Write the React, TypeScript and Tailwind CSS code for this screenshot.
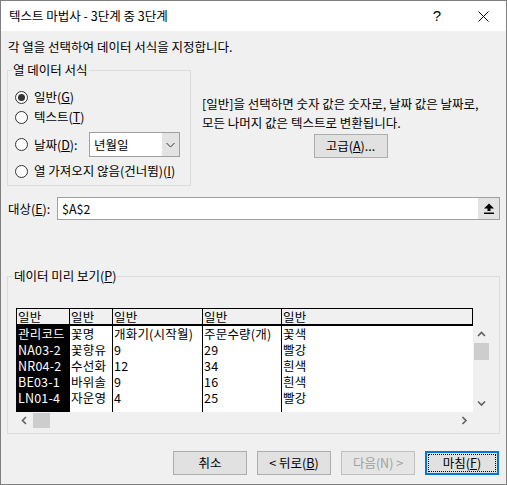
import React from 'react';

const rows = [
  ['관리코드', '꽃명', '개화기(시작월)', '주문수량(개)', '꽃색'],
  ['NA03-2', '꽃향유', '9', '29', '빨강'],
  ['NR04-2', '수선화', '12', '34', '흰색'],
  ['BE03-1', '바위솔', '9', '16', '흰색'],
  ['LN01-4', '자운영', '4', '25', '빨강'],
];

const colWidths = ['w-[53px]', 'w-[43px]', 'w-[90px]', 'w-[79px]', 'w-[192px]'];

function Radio({ checked }: { checked?: boolean }) {
  return (
    <span className="w-[13px] h-[13px] rounded-full border border-[#333333] bg-white flex items-center justify-center shrink-0">
      {checked && <span className="w-[7px] h-[7px] rounded-full bg-[#333333]" />}
    </span>
  );
}

function Chevron({ dir }: { dir: 'up' | 'down' | 'left' | 'right' }) {
  const pts = {
    up: '1,6 4.5,2.5 8,6',
    down: '1,2.5 4.5,6 8,2.5',
    left: '6,1 2.5,4.5 6,8',
    right: '2.5,1 6,4.5 2.5,8',
  }[dir];
  return (
    <svg width="9" height="9" viewBox="0 0 9 9">
      <polyline points={pts} fill="none" stroke="#606060" strokeWidth="1.6" />
    </svg>
  );
}

function Button({ children, disabled }: { children: React.ReactNode; disabled?: boolean }) {
  return (
    <div
      className={`w-[74px] h-[24px] border flex items-center justify-center leading-[16px] ${
        disabled ? 'border-[#bfbfbf] bg-[#e5e5e5] text-[#a0a0a0]' : 'border-[#adadad] bg-[#e1e1e1]'
      }`}
    >
      {children}
    </div>
  );
}

export default function App() {
  return (
    <div className="w-[507px] h-[485px] border border-[#7f7f7f] bg-[#f0f0f0] flex flex-col text-[12.5px] text-black [font-family:'Noto_Sans_CJK_KR',sans-serif]">
      {/* Title bar */}
      <div className="h-[30px] bg-white flex items-center shrink-0">
        <div className="pl-[8px] flex-1 leading-[16px]">텍스트 마법사 - 3단계 중 3단계</div>
        <div className="w-[46px] h-full flex items-center justify-center text-[15px] [font-family:'Liberation_Sans',sans-serif]">?</div>
        <div className="w-[46px] h-full flex items-center justify-center">
          <svg width="11" height="11" viewBox="0 0 11 11">
            <path d="M0.5 0.5 L10.5 10.5 M10.5 0.5 L0.5 10.5" stroke="#000" strokeWidth="1" />
          </svg>
        </div>
      </div>

      <div className="pl-[6px] flex flex-col">
        <div className="mt-[8px] h-[16px] leading-[16px] pl-[1px]">각 열을 선택하여 데이터 서식을 지정합니다.</div>

        <div className="mt-[15px] flex">
          {/* Column data format */}
          <div className="relative w-[184px] h-[116px] border border-[#dcdcdc] pt-[16px] pl-[7px] flex flex-col">
            <span className="absolute -top-[9px] left-[4px] px-[1px] bg-[#f0f0f0] leading-[16px]">열 데이터 서식</span>
            <div className="h-[20px] flex items-center gap-[6px] leading-[16px]">
              <Radio checked />
              <span>
                일반(<span className="underline">G</span>)
              </span>
            </div>
            <div className="h-[20px] flex items-center gap-[6px] leading-[16px]">
              <Radio />
              <span>
                텍스트(<span className="underline">T</span>)
              </span>
            </div>
            <div className="mt-[5px] h-[25px] flex items-center gap-[6px] leading-[16px]">
              <Radio />
              <span className="w-[49px]">
                날짜(<span className="underline">D</span>):
              </span>
              <div className="w-[91px] h-[25px] border border-[#a0a0a0] bg-white flex">
                <span className="flex-1 pl-[4px] flex items-center">년월일</span>
                <span className="w-[17px] h-full bg-[#e3e3e3] flex items-center justify-center">
                  <svg width="9" height="6" viewBox="0 0 9 6">
                    <polyline points="0.5,1 4.5,5 8.5,1" fill="none" stroke="#333" strokeWidth="1" />
                  </svg>
                </span>
              </div>
            </div>
            <div className="mt-[4px] h-[20px] flex items-center gap-[6px] leading-[16px]">
              <Radio />
              <span>
                열 가져오지 않음(건너뜀)(<span className="underline">I</span>)
              </span>
            </div>
          </div>

          {/* Explanation */}
          <div className="ml-[11px] w-[297px] pt-[24px] flex flex-col">
            <p className="leading-[19px]">
              [일반]을 선택하면 숫자 값은 숫자로, 날짜 값은 날짜로,
              <br />
              모든 나머지 값은 텍스트로 변환됩니다.
            </p>
            <div className="mt-[2px] flex justify-center">
              <Button>
                고급(<span className="underline">A</span>)...
              </Button>
            </div>
          </div>
        </div>

        {/* Destination */}
        <div className="mt-[11px] h-[23px] flex items-center">
          <span className="w-[50px] pl-[1px] leading-[16px]">
            대상(<span className="underline">E</span>):
          </span>
          <div className="w-[443px] h-[23px] border border-[#a0a0a0] bg-white flex items-center">
            <span className="pl-[4px] flex-1 leading-[16px]">$A$2</span>
            <span className="w-[21px] h-full bg-[#e3e3e3] flex items-center justify-center">
              <svg width="10" height="11" viewBox="0 0 10 11">
                <polygon points="0,5.5 5,0.5 10,5.5" fill="#000" />
                <rect x="3.5" y="5" width="3" height="3" fill="#000" />
                <rect x="0" y="9.5" width="10" height="1.5" fill="#000" />
              </svg>
            </span>
          </div>
        </div>

        {/* Data preview */}
        <div className="relative mt-[56px] w-[493px] h-[158px] border border-[#dcdcdc] pl-[8px] pt-[31px] flex flex-col">
          <span className="absolute -top-[9px] left-[5px] px-[1px] bg-[#f0f0f0] leading-[16px]">
            데이터 미리 보기(<span className="underline">P</span>)
          </span>
          <div className="flex text-[12.5px] tracking-[0.2px] leading-[16px]">
            <div className="w-[457px] flex flex-col">
              <div className="h-[16px] border-t border-black flex bg-[#f0f0f0]">
                {colWidths.map((w, i) => (
                  <div
                    key={i}
                    className={`${w} h-full border-l border-black pl-[1px] leading-[15px] ${i === 4 ? 'border-r' : ''}`}
                  >
                    일반
                  </div>
                ))}
              </div>
              <div className="h-[2px] bg-black" />
              <div className="h-[86px] flex bg-white">
                {colWidths.map((w, i) => (
                  <div
                    key={i}
                    className={`${w} h-full border-l border-black pl-[1px] flex flex-col ${
                      i === 0 ? 'bg-black text-white' : ''
                    }`}
                  >
                    {rows.map((r, j) => (
                      <div key={j} className="h-[16px] whitespace-nowrap">
                        {r[i]}
                      </div>
                    ))}
                  </div>
                ))}
              </div>
            </div>
            <div className="w-[17px] flex flex-col">
              <div className="h-[18px]" />
              <div className="h-[86px] flex flex-col items-center">
                <div className="h-[17px] w-full flex items-center justify-center">
                  <Chevron dir="up" />
                </div>
                <div className="h-[17px] w-[15px] bg-[#cdcdcd]" />
                <div className="flex-1" />
                <div className="h-[17px] w-full flex items-center justify-center">
                  <Chevron dir="down" />
                </div>
              </div>
            </div>
          </div>
          <div className="w-[457px] h-[16px] flex items-center">
            <div className="w-[17px] h-full flex items-center justify-center">
              <Chevron dir="left" />
            </div>
            <div className="w-[17px] h-[15px] bg-[#cdcdcd]" />
            <div className="flex-1" />
            <div className="w-[17px] h-full flex items-center justify-center">
              <Chevron dir="right" />
            </div>
          </div>
        </div>

        {/* Footer buttons */}
        <div className="mt-[17px] pl-[166px] flex gap-[10px]">
          <Button>취소</Button>
          <Button>
            &lt; 뒤로(<span className="underline">B</span>)
          </Button>
          <Button disabled>다음(N) &gt;</Button>
          <div className="w-[74px] h-[24px] border-2 border-[#0078d7] bg-[#e1e1e1] p-[1px]">
            <div className="h-full border border-dotted border-black flex items-center justify-center leading-[16px]">
              마침(<span className="underline">F</span>)
            </div>
          </div>
        </div>
      </div>
    </div>
  );
}
